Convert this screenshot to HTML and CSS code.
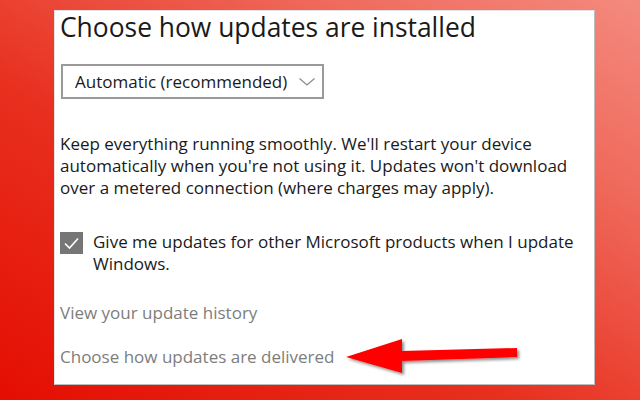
FILE: index.html
```html
<!DOCTYPE html>
<html>
<head>
<meta charset="utf-8">
<link rel="stylesheet" href="styles.css">
</head>
<body>
<div class="panel">
  <h1 class="title">Choose how updates are installed</h1>
  <div class="select">
    <span class="select-label">Automatic (recommended)</span>
    <svg class="chevron" width="16" height="8" viewBox="0 0 16 8"><path d="M0.5 0.5 L8 7 L15.5 0.5" fill="none" stroke="#8a8a8a" stroke-width="1.2"/></svg>
  </div>
  <p class="desc">Keep everything running smoothly. We'll restart your device automatically when you're not using it. Updates won't download over a metered connection (where charges may apply).</p>
  <div class="check-row">
    <span class="checkbox"><svg width="23" height="22" viewBox="0 0 23 22"><path d="M5 11.5 L9.5 16 L18 6.5" fill="none" stroke="#fff" stroke-width="1.6"/></svg></span>
    <span class="check-label">Give me updates for other Microsoft products when I update Windows.</span>
  </div>
  <a class="link link-history">View your update history</a>
  <a class="link link-delivered">Choose how updates are delivered</a>
  <svg class="arrow" width="180" height="44" viewBox="0 0 180 44">
    <defs>
      <filter id="sh" x="-10%" y="-30%" width="130%" height="170%">
        <feGaussianBlur in="SourceAlpha" stdDeviation="1.5"/>
        <feOffset dx="2" dy="2" result="b"/>
        <feComponentTransfer><feFuncA type="linear" slope="0.45"/></feComponentTransfer>
        <feMerge><feMergeNode/><feMergeNode in="SourceGraphic"/></feMerge>
      </filter>
    </defs>
    <path d="M1 20 L57 2 L57 14 L172 11 L172 20 L57 24 L57 36 Z" fill="#ff0000" filter="url(#sh)"/>
  </svg>
</div>
</body>
</html>
```

FILE: styles.css
```css
html, body {
  margin: 0;
  padding: 0;
}
body {
  width: 640px;
  height: 400px;
  box-sizing: border-box;
  padding: 10px 45px 15px 54px;
  background: linear-gradient(to top right, #e40e02 0%, #e8301f 40%, #ef6a5c 75%, #f48a7e 100%);
  font-family: "Open Sans", "Noto Sans", sans-serif;
  overflow: hidden;
}
.panel {
  position: relative;
  box-sizing: border-box;
  width: 541px;
  height: 375px;
  background: #fff;
  border: 1px solid #e2e2e2;
  border-right-color: #bdbdbd;
  border-bottom-color: #bdbdbd;
  padding: 0 0 0 5px;
  display: flex;
  flex-direction: column;
  align-items: flex-start;
  color: #1a1a1a;
}
.title {
  margin: 0;
  font-size: 26.4px;
  line-height: 32px;
  font-weight: 400;
  color: #1a1a1a;
}
.select {
  margin: 21px 0 0 1px;
  box-sizing: border-box;
  width: 263px;
  height: 35px;
  border: 2px solid #9a9a9a;
  display: flex;
  align-items: center;
  padding-left: 12px;
  gap: 12px;
  font-size: 17px;
}
.chevron {
  margin-top: 1px;
}
.desc {
  margin: 34px 0 0 0;
  font-size: 17px;
  line-height: 22px;
  width: 520px;
}
.check-row {
  margin-top: 32px;
  display: flex;
  align-items: flex-start;
  gap: 10px;
  font-size: 17px;
  line-height: 22px;
}
.checkbox {
  flex: 0 0 auto;
  width: 23px;
  height: 22px;
  margin-top: 1px;
  background: #767676;
  display: flex;
}
.check-label {
  width: 495px;
}
.link {
  font-size: 17px;
  line-height: 22px;
  color: #7d7d7d;
}
.link-history {
  margin-top: 27px;
}
.link-delivered {
  margin-top: 22px;
}
.arrow {
  position: absolute;
  left: 290px;
  top: 326px;
}
```
